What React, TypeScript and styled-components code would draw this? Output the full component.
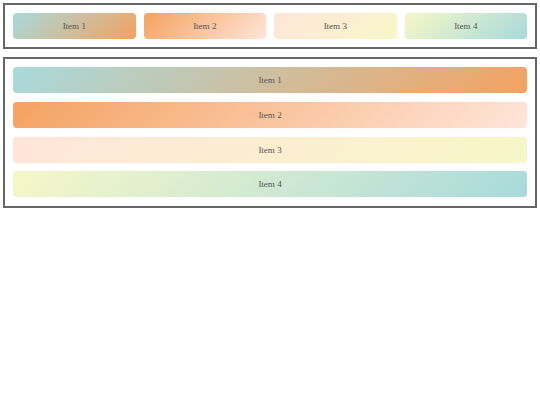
import React from 'react';
import styled, { createGlobalStyle } from 'styled-components';

const GlobalStyles = createGlobalStyle`
  body {
    margin: 0;
    background: #fff;
    font-family: 'Liberation Serif', 'Times New Roman', serif;
  }
`;

const palette = ['#a8dadc', '#f4a261', '#ffe5d9', '#f7f7c8'];

const Page = styled.div`
  display: flex;
  flex-direction: column;
  gap: 8px;
  padding: 3px;
`;

// grid of items: four across, or one per row when stacked
const Panel: any = styled.div`
  display: grid;
  grid-template-columns: ${(props: any) => (props.vertical ? '1fr' : 'repeat(4, 1fr)')};
  gap: ${(props: any) => (props.vertical ? '8.67px' : '8px')};
  padding: ${(props: any) => (props.vertical ? '8.3px 8px' : '8px')};
  border: 2px solid #666;
`;

const Item: any = styled.div`
  height: 26px;
  border-radius: 4px;
  display: flex;
  align-items: center;
  justify-content: center;
  font-size: 9px;
  color: #555;
  background: linear-gradient(135deg, ${(props: any) => props.from}, ${(props: any) => props.to});
  box-shadow: 0 0 2px rgba(0, 0, 0, 0.06);
`;

const items = [1, 2, 3, 4];

function ItemList({ vertical }: { vertical?: boolean }) {
  return (
    <Panel vertical={vertical}>
      {items.map((n, i) => (
        <Item key={n} from={palette[i]} to={palette[(i + 1) % palette.length]}>
          Item {n}
        </Item>
      ))}
    </Panel>
  );
}

export default function App() {
  return (
    <>
      <GlobalStyles />
      <Page>
        <ItemList />
        <ItemList vertical />
      </Page>
    </>
  );
}
